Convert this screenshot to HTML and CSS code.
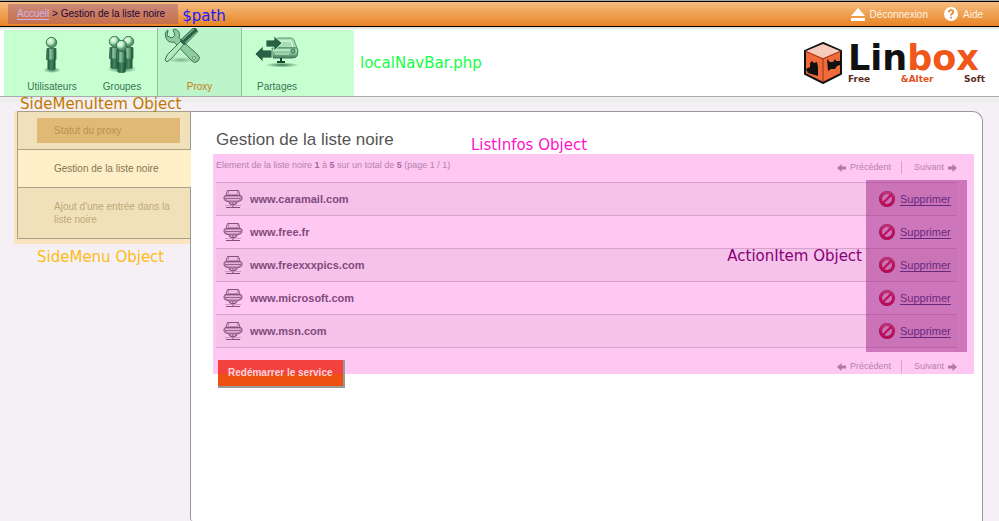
FILE: index.html
```html
<!DOCTYPE html>
<html lang="fr">
<head>
<meta charset="utf-8">
<title>Gestion de la liste noire</title>
<link rel="stylesheet" href="styles.css">
</head>
<body>
<svg class="defs" aria-hidden="true">
  <defs>
    <linearGradient id="gBody"><stop offset="0" stop-color="#286143"/><stop offset=".4" stop-color="#86c49c"/><stop offset="1" stop-color="#255b3e"/></linearGradient>
    <linearGradient id="gLegs"><stop offset="0" stop-color="#1e5639"/><stop offset=".5" stop-color="#438760"/><stop offset="1" stop-color="#174a30"/></linearGradient>
    <radialGradient id="gHead" cx=".38" cy=".35"><stop offset="0" stop-color="#ecfff0"/><stop offset=".6" stop-color="#b5ebc0"/><stop offset="1" stop-color="#5b9874"/></radialGradient>
    <linearGradient id="gDisk" x2="0" y2="1"><stop offset="0" stop-color="#b7ecc2"/><stop offset=".5" stop-color="#89c39a"/><stop offset="1" stop-color="#417b59"/></linearGradient>
    <radialGradient id="gShade"><stop offset="0" stop-color="#397653"/><stop offset="1" stop-color="#397653" stop-opacity="0"/></radialGradient>
    <linearGradient id="gRed" x2="0" y2="1"><stop offset="0" stop-color="#e84a68"/><stop offset=".5" stop-color="#e60a3c"/><stop offset="1" stop-color="#dd0030"/></linearGradient>
    <g id="person">
      <path d="M2 12.500h9v11h-1.500V33h-6V23.500H1.500z" fill="url(#gBody)" stroke="#286143" stroke-width=".8"/>
      <path d="M2.500 23.500h8V33q-4 2-8 0z" fill="url(#gLegs)"/>
      <path d="M3.500 13v10M9.500 13v10" stroke="#1e5639" stroke-width=".7"/>
      <circle cx="6.500" cy="6.500" r="5.200" fill="url(#gHead)" stroke="#397653"/>
    </g>
    <symbol id="disk" viewBox="0 0 20 20">
      <g fill="none" stroke="#85507f">
        <path d="M4.500 1.500h11l1.500 5H3z" fill="#f0bde5"/>
        <path d="M6 1.500l-1 4h10l-1-4" stroke="#a9739f" stroke-width=".7"/>
        <path d="M3 6.500h14q2 0 2 2v1q0 2-2 2.500l-3 1H6l-3-1q-2-.5-2-2.500v-1q0-2 2-2z" fill="#c68fbc"/>
        <path d="M2.500 8.500h15M4 10.500h12" stroke="#eebbe3" stroke-width=".8"/>
        <path d="M2 9.500h16" stroke-width=".7"/>
        <path d="M6 13.500l2 2h4l2-2M10 13.500V18" stroke-width="1.200"/>
        <path d="M2 16.500h16" stroke="#c590bd" stroke-width=".8"/>
        <path d="M3 18.500h14"/>
      </g>
    </symbol>
    <symbol id="forbid" viewBox="0 0 16 16">
      <circle cx="8" cy="8" r="6.500" fill="none" stroke="#7a1650" stroke-width="3"/>
      <circle cx="8" cy="8" r="6.500" fill="none" stroke="url(#gRed)" stroke-width="2.300"/>
      <path d="M3.700 12.300l8.600-8.600" stroke="#e60a3c" stroke-width="2.300"/>
    </symbol>
    <symbol id="left" viewBox="0 0 9 8"><path d="M0 4l4.500-4v2.500H9v3H4.500V8z" fill="#b07aa8"/></symbol>
    <symbol id="right" viewBox="0 0 9 8"><path d="M9 4L4.500 0v2.500H0v3h4.500V8z" fill="#b07aa8"/></symbol>
  </defs>
</svg>

<div class="topbar">
  <div class="path"><a href="#">Accueil</a> &gt; Gestion de la liste noire</div>
  <span class="path-note">$path</span>
  <div class="session">
    <a href="#"><svg width="14" height="13" viewBox="0 0 14 13"><path d="M7 0l7 8H0zM0 10h14v3H0z" fill="#fff"/></svg>Déconnexion</a>
    <a href="#"><svg width="14" height="14" viewBox="0 0 14 14"><circle cx="7" cy="7" r="7" fill="#fff"/><path d="M4.800 5.200Q4.900 3.200 7 3.200q2.300 0 2.300 1.800 0 1.200-1.300 1.900-1 .5-1 1.600M7 9.800v1.600" fill="none" stroke="#e88a35" stroke-width="1.800"/></svg>Aide</a>
  </div>
</div>

<header class="header">
  <nav class="navbar">
    <a class="nav-item" href="#"><svg width="18" height="37" viewBox="0 0 18 37"><ellipse cx="9" cy="34" rx="9" ry="3" fill="url(#gShade)"/><use href="#person" x="2" y="0"/></svg>Utilisateurs</a>
    <a class="nav-item" href="#"><svg width="30" height="37" viewBox="0 0 30 37"><ellipse cx="15" cy="33" rx="15" ry="4" fill="url(#gShade)"/><use href="#person" x="1" y="-1"/><use href="#person" x="15" y="-1"/><use href="#person" x="8" y="3"/></svg>Groupes</a>
    <a class="nav-item current" href="#"><svg width="36" height="36" viewBox="0 0 36 36">
      <ellipse cx="17" cy="32" rx="14" ry="3" fill="url(#gShade)" opacity=".5"/>
      <path d="M4 2q-4 2-2 8 2 5 8 4l18 19q3 3 6 0t0-6L15 10q2-7-4-9l-2 1 2 5-3 3-5-2z" fill="#8fcda0" stroke="#397653"/>
      <circle cx="30" cy="30" r="1.500" fill="#d5ffdc" stroke="#397653" stroke-width=".7"/>
      <path d="M1 32l2-5 15-15 3 3L8 30l-5 4z" fill="#b3e9bf" stroke="#397653"/>
      <path d="M16 12L29 0q4-1 5 4L21 17q-4-1-5-5z" fill="#286143"/>
      <path d="M18 12L30 1M21 15L33 4" stroke="#76b78b" stroke-width="1.200"/>
    </svg>Proxy</a>
    <a class="nav-item" href="#"><svg width="44" height="32" viewBox="0 0 44 32">
      <ellipse cx="27" cy="29" rx="17" ry="2.500" fill="url(#gShade)"/>
      <path d="M21 3q1-1 3-1h12q2 0 3 2l3 8H18z" fill="#a7dfb4" stroke="#5b9874"/>
      <path d="M24 5h12l2 6" fill="none" stroke="#e2ffe7"/>
      <path d="M17 12h24q2 0 2 3l-1 5q-1 2-5 2H18z" fill="url(#gDisk)" stroke="#417b59"/>
      <path d="M20 14h14M20 18h14" stroke="#c0f3ca"/><circle cx="38" cy="15" r="2" fill="#76b78b" stroke="#286143" stroke-width=".8"/>
      <path d="M26 22v4M22 26h8" stroke="#164a2c" stroke-width="2"/>
      <path d="M11 4h8V0l8 7-8 8v-4h-8z" fill="#286143" stroke="#c4ffd0" stroke-width=".8"/>
      <path d="M0 18l8-8v4h9v8H8v4z" fill="#286143" stroke="#c4ffd0" stroke-width=".8"/>
    </svg>Partages</a>
  </nav>
  <span class="nav-note">localNavBar.php</span>
  <div class="logo">
    <svg width="40" height="42" viewBox="0 0 40 42">
      <path d="M20 1l18 8v23L20 41 2 32V9z" fill="#f06a3c" stroke="#111" stroke-width="2"/>
      <path d="M20 2l17 7-17 7L3 9z" fill="#f6cbbd"/>
      <path d="M2 9l18 8 18-8M20 17v23" fill="none" stroke="#9b3514"/>
      <path d="M3 27l4-2 0-4 2-2 2 2 3-1 1 5v9L5 31z" fill="#111"/>
      <path d="M25 29l-1-12 3 3 3 0 2-3 1 2 5 0-1 4-3 1-2 3-4 0z" fill="#111"/>
    </svg>
    <div class="logo-text">
      <div class="wordmark">Lin<span>box</span></div>
      <div class="tagline"><span>Free</span><span class="warm">&amp;Alter</span><span>Soft</span></div>
    </div>
  </div>
</header>

<div class="body">
  <aside class="side">
    <span class="item-note">SideMenuItem Object</span>
    <nav class="menu">
      <a href="#"><span class="marked">Statut du proxy</span></a>
      <a class="active" href="#">Gestion de la liste noire</a>
      <a href="#">Ajout d'une entrée dans la liste noire</a>
    </nav>
    <div class="menu-note">SideMenu Object</div>
  </aside>
  <main class="panel">
    <h1>Gestion de la liste noire</h1>
    <section class="infos">
      <span class="infos-note">ListInfos Object</span>
      <div class="bar">
        <p>Element de la liste noire <b>1</b> à <b>5</b> sur un total de <b>5</b> (page 1 / 1)</p>
        <div class="pager"><a href="#"><svg width="9" height="8"><use href="#left"/></svg>Précédent</a><a href="#">Suivant<svg width="9" height="8"><use href="#right"/></svg></a></div>
      </div>
      <div class="list">
        <table>
          <tbody>
            <tr><td class="ico"><svg width="20" height="20"><use href="#disk"/></svg></td><td class="site">www.caramail.com</td><td class="act"><a href="#"><svg width="16" height="16"><use href="#forbid"/></svg><span>Supprimer</span></a></td></tr>
            <tr><td class="ico"><svg width="20" height="20"><use href="#disk"/></svg></td><td class="site">www.free.fr</td><td class="act"><a href="#"><svg width="16" height="16"><use href="#forbid"/></svg><span>Supprimer</span></a></td></tr>
            <tr><td class="ico"><svg width="20" height="20"><use href="#disk"/></svg></td><td class="site">www.freexxxpics.com</td><td class="act"><a href="#"><svg width="16" height="16"><use href="#forbid"/></svg><span>Supprimer</span></a></td></tr>
            <tr><td class="ico"><svg width="20" height="20"><use href="#disk"/></svg></td><td class="site">www.microsoft.com</td><td class="act"><a href="#"><svg width="16" height="16"><use href="#forbid"/></svg><span>Supprimer</span></a></td></tr>
            <tr><td class="ico"><svg width="20" height="20"><use href="#disk"/></svg></td><td class="site">www.msn.com</td><td class="act"><a href="#"><svg width="16" height="16"><use href="#forbid"/></svg><span>Supprimer</span></a></td></tr>
          </tbody>
        </table>
        <div class="action-zone"></div>
        <span class="action-note">ActionItem Object</span>
      </div>
      <div class="bar bottom">
        <div class="pager"><a href="#"><svg width="9" height="8"><use href="#left"/></svg>Précédent</a><a href="#">Suivant<svg width="9" height="8"><use href="#right"/></svg></a></div>
      </div>
    </section>
    <button class="restart" type="button">Redémarrer le service</button>
  </main>
</div>
</body>
</html>
```
FILE: styles.css
```css
* { box-sizing: border-box; }
body {
  margin: 0;
  min-height: 100vh;
  display: flex;
  flex-direction: column;
  background: #f5f0f5;
  font: 10px/13px "Liberation Sans", Arial, sans-serif;
}
a { color: inherit; text-decoration: none; }
svg { display: block; flex: none; }
.defs { position: absolute; width: 0; height: 0; }

/* annotation labels */
.path-note, .nav-note, .item-note, .menu-note, .infos-note, .action-note {
  font: 15px/18px "DejaVu Sans", sans-serif;
  white-space: nowrap;
}
.path-note { color: #1a1aff; padding-top: 3px; }
.nav-note { color: #11ff44; margin-left: 6px; }
.item-note { color: #c07800; position: absolute; left: 20px; top: -16px; z-index: 3; }
.menu-note { color: #ffbb11; margin: 4px 0 0 37px; }
.infos-note { color: #ff11cc; position: absolute; left: 258px; top: -18px; }
.action-note { color: #880077; position: absolute; right: 95px; top: 65px; }

.topbar {
  display: flex;
  align-items: center;
  gap: 4px;
  height: 27px;
  padding: 1px 16px 0 8px;
  border-top: 1px solid #aaa49a;
  border-bottom: 1px solid #000;
  background: linear-gradient(#000 1px, #f5bd80 1px, #e98425);
}
.path {
  padding: 3px 13px 4px 9px;
  line-height: 13px;
  color: #250535;
  background: rgba(145, 70, 120, .4);
}
.path a { color: #d2b4eb; border-bottom: 1px solid #d2b4eb; }
.session { margin-left: auto; display: flex; gap: 16px; color: #fff3e6; }
.session a { display: flex; align-items: center; gap: 5px; }

.header {
  display: flex;
  align-items: center;
  padding: 3px 14px 0 4px;
  background: linear-gradient(#e3e3e3 2px, #fff 2px);
  border-bottom: 1px solid #aaa;
}
.navbar {
  display: flex;
  width: 350px;
  height: 66px;
  padding-left: 13px;
  background: #c6ffd0;
}
.nav-item {
  width: 70px;
  display: flex;
  flex-direction: column;
  justify-content: space-between;
  align-items: center;
  padding: 6px 0 3px;
  color: #397653;
}
.nav-item.current {
  width: 85px;
  margin-top: -2px;
  padding-top: 0;
  color: #c1800f;
  background: #bef4c9;
  border: solid #8fc49b;
  border-width: 0 1px;
}
.current svg { align-self: flex-start; margin-left: 6px; }
.logo { margin-left: auto; display: flex; align-items: center; gap: 5px; }
.logo-text { width: 137px; }
.wordmark { font: bold 35px/33px "DejaVu Sans", sans-serif; color: #111; }
.wordmark span { color: #f0571b; }
.tagline {
  display: flex;
  justify-content: space-between;
  font: bold 9px/9px "DejaVu Sans", sans-serif;
  color: #5a2d25;
}
.tagline .warm { color: #e2511e; }

.body {
  flex: 1;
  display: flex;
  padding: 14px 16px 0 0;
  background: linear-gradient(#edefef 5px, transparent 5px);
}
.side { position: relative; width: 190px; flex: none; }
.menu {
  margin: 0 0 0 14px;
  padding: 0 0 5px 3px;
  background: #f9e4bf;
}
.menu a {
  display: block;
  padding: 12px 8px 12px 36px;
  color: #bda978;
  background: #f0e1ba;
  border: solid #aaa087;
  border-width: 1px 0 0 1px;
}
.menu a:last-child { border-bottom-width: 1px; }
.menu a:first-child { padding: 6px 10px 6px 19px; }
.menu .marked { display: block; padding: 6px 17px 6px; background: #dfb975; color: #ba9252; }
.menu a.active {
  position: relative;
  margin-right: -1px;
  color: #85764f;
  background: #ffefc8;
}

.panel {
  flex: 1;
  min-width: 0;
  padding: 18px 8px 20px 22px;
  background: #fff;
  border: 1px solid #999;
  border-bottom: 0;
  border-radius: 0 10px 0 3px;
}
h1 { margin: 0 0 4px 3px; font-size: 17px; line-height: 20px; font-weight: normal; color: #555; }
.infos { position: relative; padding: 0 17px 0 3px; background: #fec8f3; }
.bar { display: flex; justify-content: space-between; height: 28px; color: #b582ad; }
.bar p { margin: 0; padding-top: 5px; font-size: 9px; }
.bar.bottom { justify-content: flex-end; height: 26px; padding-top: 4px; }
.bar b { color: #a46b9d; }
.pager { display: flex; padding-top: 7px; font-size: 9px; }
.bottom .pager { padding-top: 8px; }
.pager a { display: flex; align-items: center; gap: 4px; height: 13px; }
.pager a + a { margin-left: 10px; padding-left: 12px; border-left: 1px solid #d5a3cd; }
.list { position: relative; }
table { width: 100%; border-collapse: collapse; font-size: 11px; }
tr { height: 33px; border-top: 1px solid #d8a0cc; }
tr:last-child { border-bottom: 1px solid #d8a0cc; }
tr:nth-child(odd) { background: #f5c2ea; }
td { padding: 0; }
.ico { width: 34px; padding-left: 7px; }
.site { font-weight: bold; color: #824b7c; }
.act { width: 78px; }
.act a { display: flex; align-items: center; gap: 5px; color: #383982; }
.act span { border-bottom: 1px solid #383982; line-height: 12px; }
.action-zone {
  position: absolute;
  right: -10px;
  top: -2px;
  bottom: -4px;
  width: 101px;
  background: rgba(152, 26, 125, .47);
  pointer-events: none;
}
.restart {
  position: relative;
  display: block;
  margin: -14px 0 0 5px;
  padding: 6px 10px 7px;
  font: bold 10px/13px "Liberation Sans", Arial, sans-serif;
  color: #ffd3dd;
  background: linear-gradient(#f3423e 14px, #ee5011 14px);
  border: solid #999;
  border-width: 0 2px 2px 0;
}
```
